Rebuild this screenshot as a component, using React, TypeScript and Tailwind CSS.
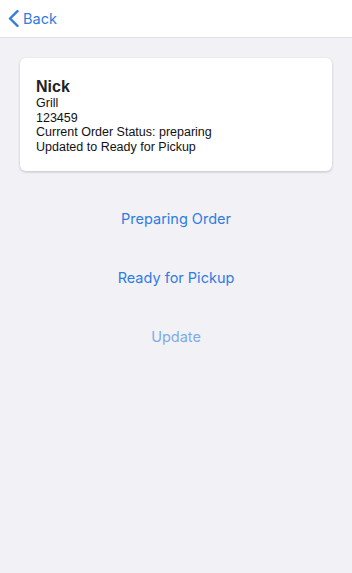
export default function App() {
  return (
    <div className="w-[352px] h-[573px] bg-[#f2f1f6] flex flex-col" style={{ fontFamily: "Inter, 'Liberation Sans', sans-serif" }}>
      <div className="h-[38px] bg-white border-b border-[#e0e0e4] flex items-center pl-[8px]">
        <svg width="11" height="17" viewBox="0 0 11 17" className="mr-[4px]">
          <path d="M9.5 1.2 L2 8.5 L9.5 15.8" fill="none" stroke="#2f7de1" strokeWidth="2.4" strokeLinecap="round" strokeLinejoin="round" />
        </svg>
        <span className="text-[14.5px] text-[#2f7de1]">Back</span>
      </div>
      <div className="px-[20px] pt-[20px]">
        <div className="bg-white rounded-[6px] shadow-[0_1px_3px_rgba(0,0,0,0.2)] pl-[16px] pt-[20px] pb-[17px] text-[#111] text-[12.5px] leading-[14.5px]" style={{ fontFamily: "'Liberation Sans', Arial, sans-serif" }}>
          <div className="text-[16px] font-bold leading-[18px] text-[#222]">Nick</div>
          <div>Grill</div>
          <div>123459</div>
          <div>Current Order Status: preparing</div>
          <div>Updated to Ready for Pickup</div>
        </div>
      </div>
      <div className="flex flex-col items-center mt-[39px] gap-[41px] text-[14.5px] leading-[18px]">
        <div className="text-[#2f7de1]">Preparing Order</div>
        <div className="text-[#2f7de1]">Ready for Pickup</div>
        <div className="text-[#2f7de1] opacity-60">Update</div>
      </div>
    </div>
  );
}
